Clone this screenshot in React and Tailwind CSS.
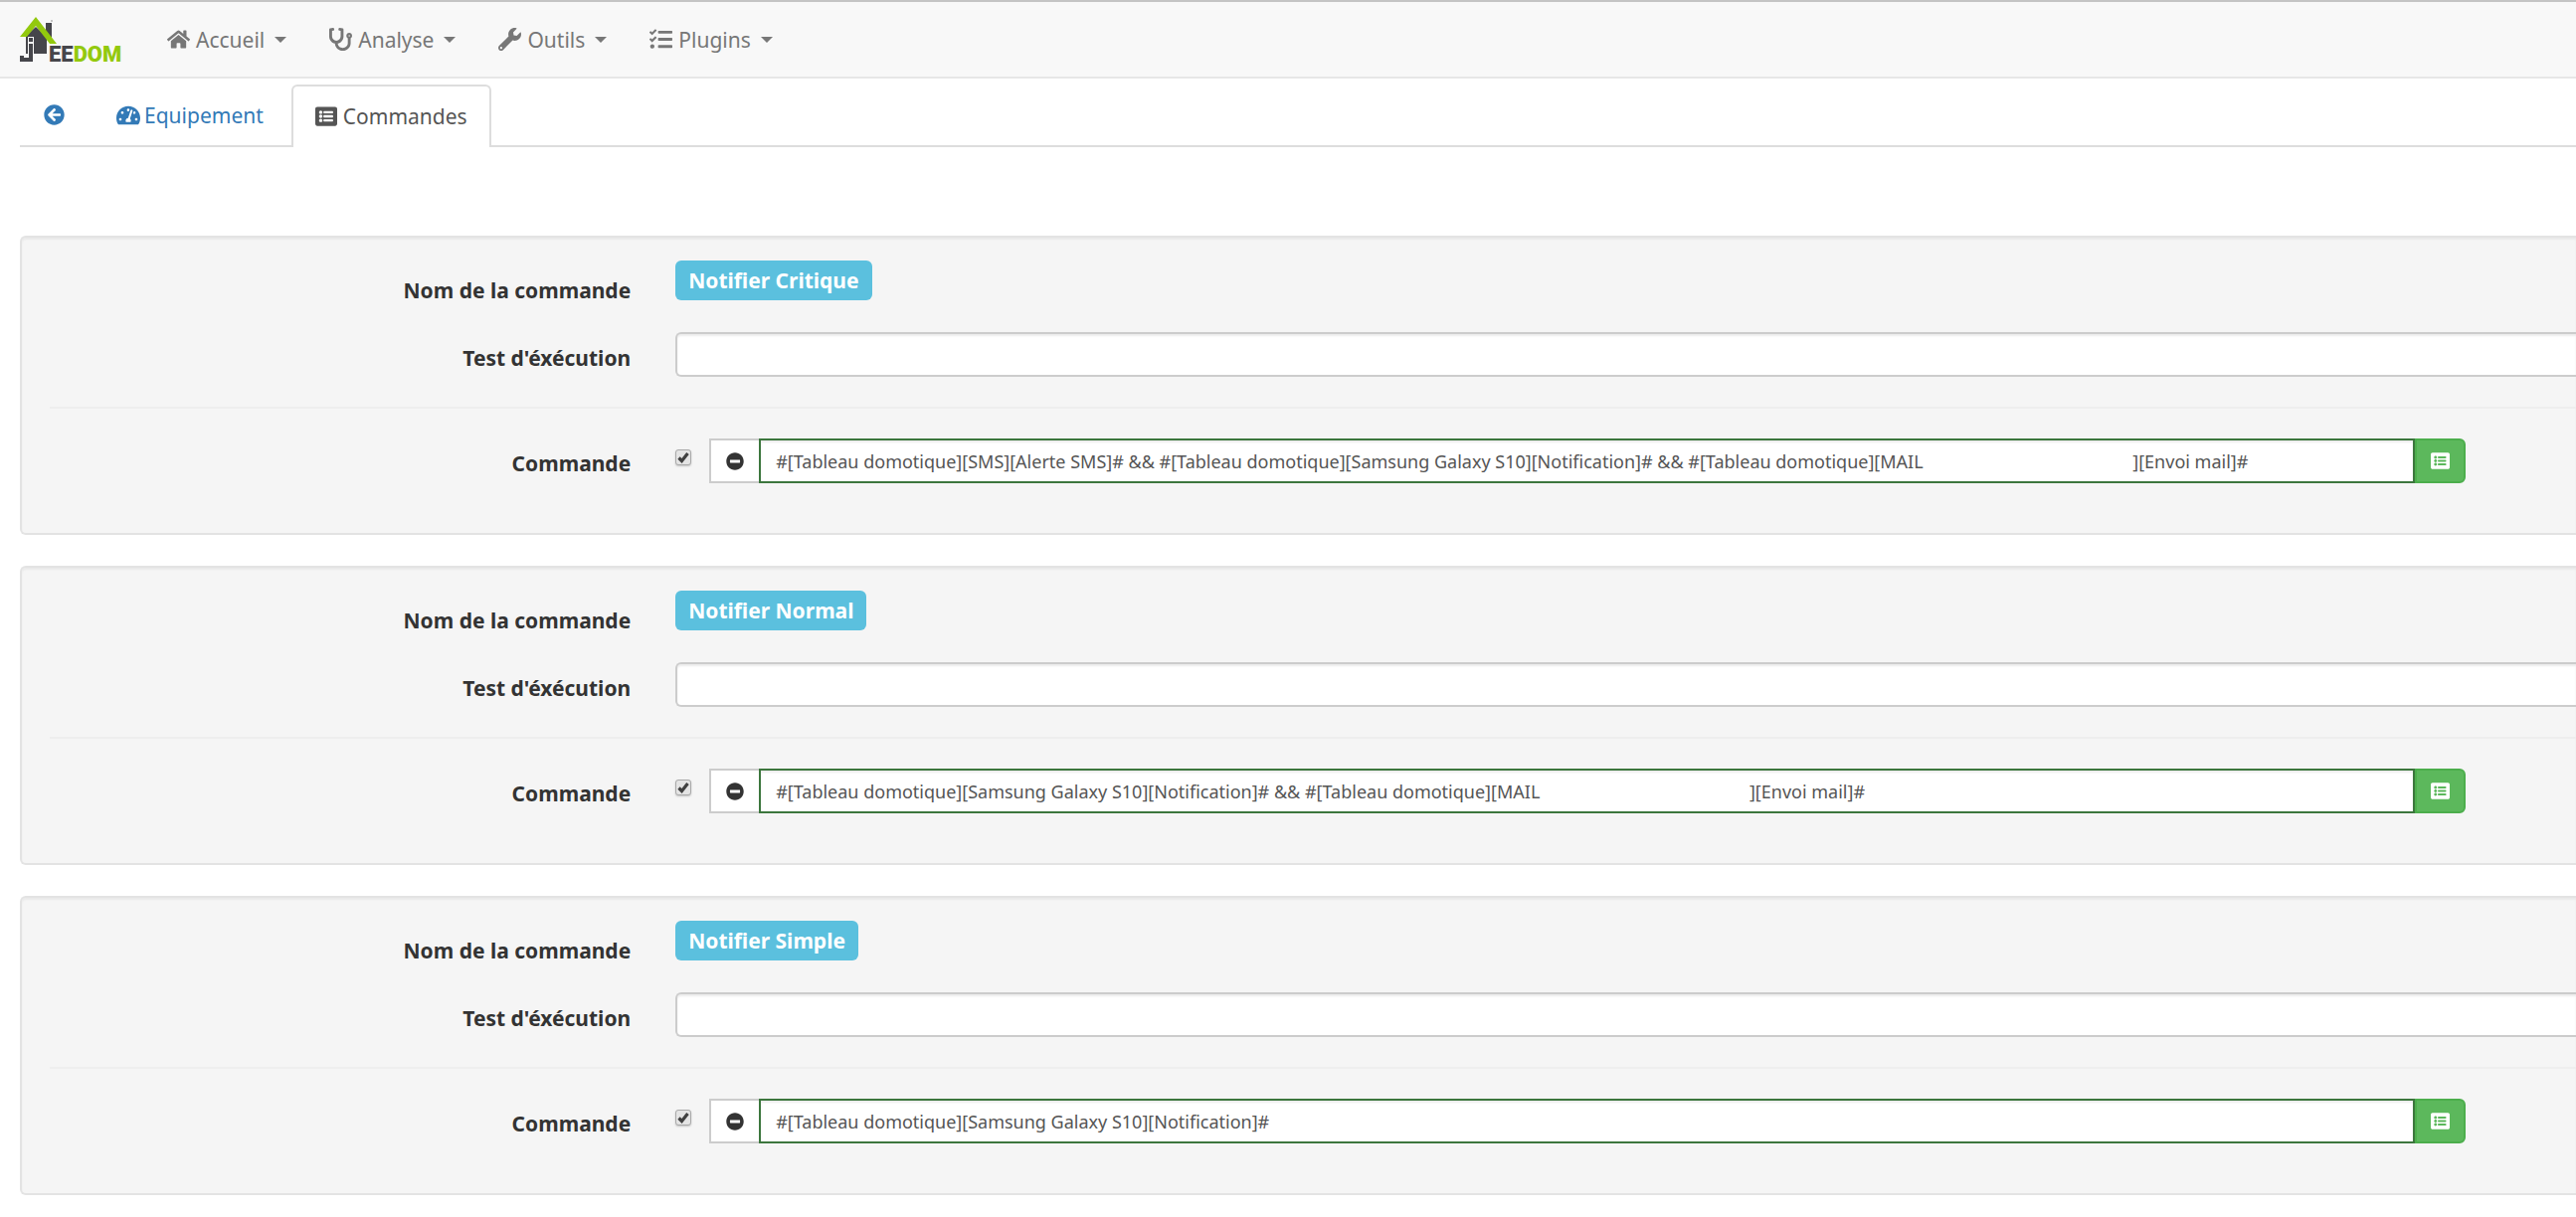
import React from 'react';
import {
  FaArrowCircleLeft,
  FaHome,
  FaListAlt,
  FaMinusCircle,
  FaStethoscope,
  FaTachometerAlt,
  FaTasks,
  FaWrench,
} from 'react-icons/fa';

const menus = [
  { label: 'Accueil', icon: FaHome },
  { label: 'Analyse', icon: FaStethoscope },
  { label: 'Outils', icon: FaWrench },
  { label: 'Plugins', icon: FaTasks },
];

const commands = [
  {
    id: 'critique',
    name: 'Notifier Critique',
    value:
      '#[Tableau domotique][SMS][Alerte SMS]# && #[Tableau domotique][Samsung Galaxy S10][Notification]# && #[Tableau domotique][MAIL' +
      ' '.repeat(45) +
      '][Envoi mail]#',
  },
  {
    id: 'normal',
    name: 'Notifier Normal',
    value:
      '#[Tableau domotique][Samsung Galaxy S10][Notification]# && #[Tableau domotique][MAIL' +
      ' '.repeat(45) +
      '][Envoi mail]#',
  },
  {
    id: 'simple',
    name: 'Notifier Simple',
    value: '#[Tableau domotique][Samsung Galaxy S10][Notification]#',
  },
];

function Logo() {
  return (
    <svg width="108" height="58" viewBox="0 -5 108 58" role="img" aria-label="Jeedom">
      {/* chimney and wall */}
      <path d="M26 7h6v17h-6z" fill="#46464b" />
      <path d="M6 20L16 11L27 21V38H6z" fill="#46464b" />
      {/* the j, outlined where it crosses the wall */}
      <path d="M8 21h6v17H8z" fill="#f8f8f8" />
      <path d="M9 22h4v4H9zM9 28h4v18H0v-6h4v2h5z" fill="#46464b" />
      {/* roof */}
      <path d="M16 1L0 21H7L16 10L30 28H37Z" fill="#93c90e" />
      <circle cx="32" cy="5" r="1" fill="#b5b5b5" />
      <text x="29" y="46" className="font-['Roboto'] text-[22px] font-black">
        <tspan fill="#46464b">EE</tspan>
        <tspan fill="#93c90e">DOM</tspan>
      </text>
    </svg>
  );
}

function Navbar() {
  return (
    <nav className="flex h-[79px] items-center border-t-2 border-b-2 border-t-[#c4c4c4] border-b-[#e7e7e7] bg-[#f8f8f8] pl-5">
      <a href="#accueil" className="mr-10 block">
        <Logo />
      </a>
      <ul className="flex items-center gap-[43px]">
        {menus.map(({ label, icon: Icon }) => (
          <li key={label}>
            <button type="button" className="flex items-center text-[21px] leading-[30px] text-[#777]">
              <Icon className="mr-1.5 text-[23px]" />
              {label}
              <span className="ml-2.5 border-x-6 border-t-6 border-x-transparent border-t-[#777]" />
            </button>
          </li>
        ))}
      </ul>
    </nav>
  );
}

function Tabs() {
  return (
    <div className="mt-1.5 ml-5 flex h-[63px] border-b-2 border-[#ddd] text-[21px] leading-[30px] text-[#337ab7]">
      <a href="#retour" aria-label="Retour" className="flex items-center px-6">
        <FaArrowCircleLeft />
      </a>
      <a href="#equipement" className="ml-1 flex items-center px-6">
        <FaTachometerAlt className="mr-1 text-2xl" />
        Equipement
      </a>
      <a
        href="#commandes"
        className="ml-1 -mb-0.5 flex items-center rounded-t-md border-2 border-b-0 border-[#ddd] bg-white px-[22px] pb-0.5 text-[#555]"
      >
        <FaListAlt className="mr-1.5 text-[22px]" />
        Commandes
      </a>
    </div>
  );
}

function CommandPanel({ id, name, value }) {
  return (
    <section className="rounded-l-md border-2 border-r-0 border-[#e3e3e3] bg-[#f5f5f5] pt-[23px] pb-[50px] pl-7 shadow-[inset_0_2px_2px_rgba(0,0,0,0.05)]">
      <div className="flex h-[72px] items-start gap-[45px]">
        <span className="mt-[15px] w-[23%] text-right font-bold">Nom de la commande</span>
        <span className="rounded-md bg-[#5bc0de] px-[13px] py-[5px] font-bold text-white">{name}</span>
      </div>
      <div className="flex items-start gap-[45px]">
        <label htmlFor={`test-${id}`} className="mt-[11px] w-[23%] text-right font-bold">
          Test d'éxécution
        </label>
        <input
          id={`test-${id}`}
          type="text"
          className="h-[45px] min-w-0 flex-1 rounded-l-md border-2 border-r-0 border-[#ccc] bg-white px-4 text-lg shadow-[inset_0_2px_2px_rgba(0,0,0,0.075)]"
        />
      </div>
      <hr className="my-[30px] border-t-2 border-[#eee]" />
      <div className="flex items-start gap-[45px]">
        <label htmlFor={`cmd-${id}`} className="mt-2.5 w-[23%] text-right font-bold">
          Commande
        </label>
        <div className="flex min-w-0 flex-1 items-start pr-[111px]">
          <input
            type="checkbox"
            defaultChecked
            aria-label={`Activer ${name}`}
            className="mt-[11px] mr-[18px] size-4 shrink-0 appearance-none rounded-[3px] border border-[#a9a9a9] bg-[#e4e4e4] bg-[url('data:image/svg+xml,%3Csvg%20xmlns=%22http://www.w3.org/2000/svg%22%20viewBox=%220%200%2014%2014%22%3E%3Cpath%20d=%22M2.500%207.500L5.500%2010.500L11.500%203%22%20fill=%22none%22%20stroke=%22%23404040%22%20stroke-width=%223.200%22/%3E%3C/svg%3E')] shadow-[0_1px_2px_rgba(0,0,0,0.2)]"
          />
          <div className="flex h-[45px] min-w-0 flex-1">
            <button
              type="button"
              aria-label="Supprimer"
              className="flex w-[50px] shrink-0 items-center justify-center border-2 border-r-0 border-[#ccc] bg-white text-lg text-[#333]"
            >
              <FaMinusCircle />
            </button>
            <input
              id={`cmd-${id}`}
              type="text"
              defaultValue={value}
              className="min-w-0 flex-1 border-2 border-[#3c763d] bg-white px-[15px] text-lg text-[#555] shadow-[inset_0_2px_2px_rgba(0,0,0,0.075)]"
            />
            <button
              type="button"
              aria-label="Choisir une commande"
              className="flex w-[51px] shrink-0 items-center justify-center rounded-r-md border-2 border-[#4cae4c] bg-[#5cb85c] text-[19px] text-white"
            >
              <FaListAlt />
            </button>
          </div>
        </div>
      </div>
    </section>
  );
}

export default function App() {
  return (
    <div className="overflow-hidden bg-white font-['Noto_Sans',sans-serif] text-[21px] leading-[30px] text-[#333]">
      <Navbar />
      <Tabs />
      <main className="mt-[89px] mb-5 ml-5 flex flex-col gap-[31px]">
        {commands.map((command) => (
          <CommandPanel key={command.id} {...command} />
        ))}
      </main>
    </div>
  );
}
